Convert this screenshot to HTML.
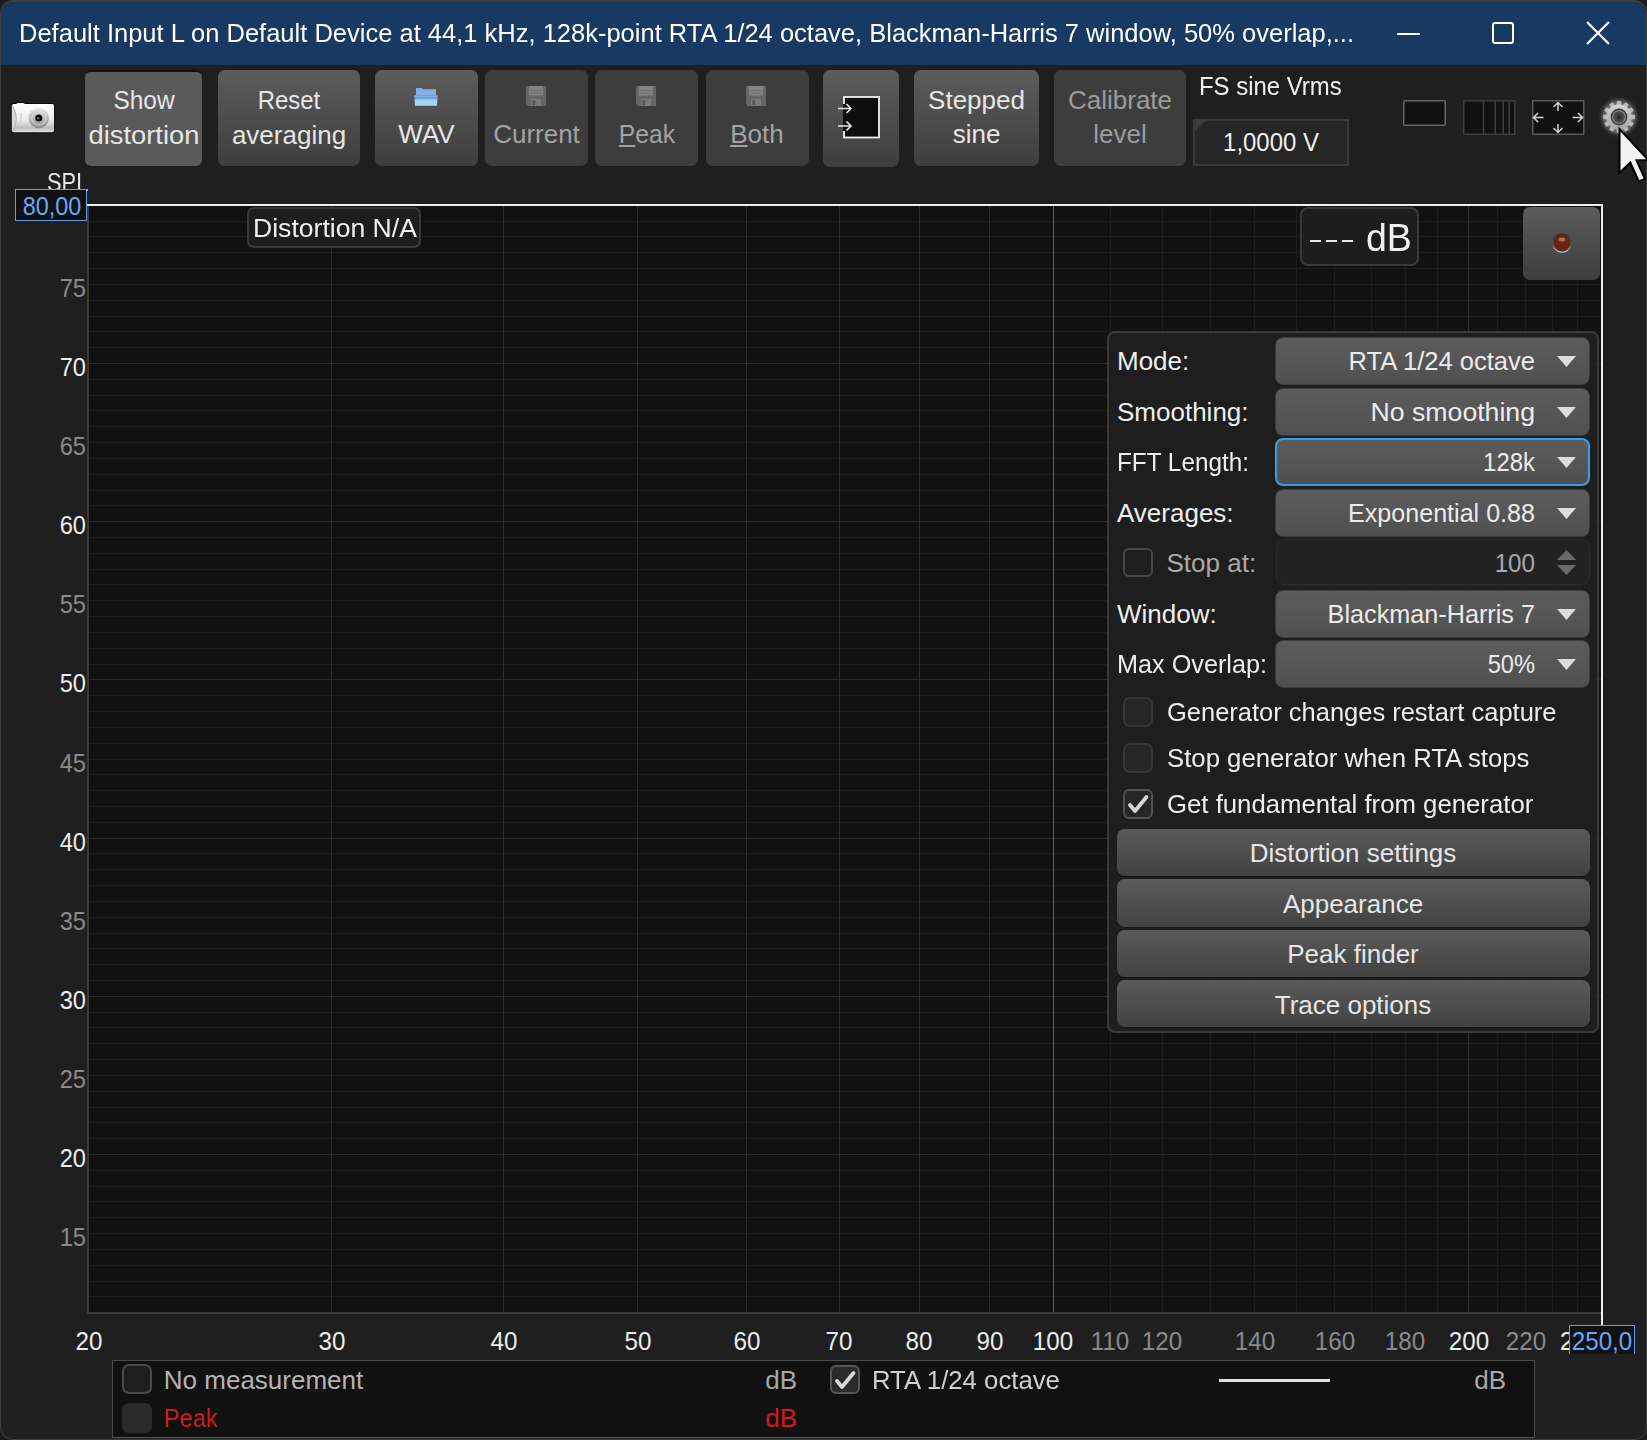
<!DOCTYPE html><html><head><meta charset="utf-8"><style>
html,body{margin:0;padding:0;background:#1c1c1c;width:1647px;height:1440px;overflow:hidden}
.t{position:absolute;white-space:nowrap;font-family:"Liberation Sans", sans-serif}
.b{position:absolute;box-sizing:border-box}
#win{position:absolute;left:0;top:0;width:1647px;height:1440px;box-sizing:border-box;border:1px solid #3e3e3e;border-top-width:2px;border-radius:13px;background:#1f1f1f;overflow:hidden}
</style></head><body><div id="win"></div>

<div class="b" style="left:1px;top:2px;width:1645px;height:63px;background:#173962;border-radius:12px 12px 0 0"></div>
<div class="t" style="left:19px;top:20.49px;font-size:26px;line-height:26px;color:#ffffff;transform: scaleX(0.981);transform-origin:left center;">Default Input L on Default Device at 44,1 kHz, 128k-point RTA 1/24 octave, Blackman-Harris 7 window, 50% overlap,...</div>
<div class="b" style="left:1397px;top:33px;width:23px;height:2px;background:#fff"></div>
<div class="b" style="left:1492px;top:22px;width:22px;height:22px;border:2px solid #fff;border-radius:3px"></div>
<svg class="b" style="left:1585px;top:20px" width="26" height="26"><path d="M2 2 L24 24 M24 2 L2 24" stroke="#fff" stroke-width="2.2"/></svg>
<div class="b" style="left:85px;top:70px;width:117px;height:96px;background:#5a5a5a;border-radius:6px;border-top:2px solid #111"></div>
<div class="t" style="left:143.5px;top:87.49px;font-size:26px;line-height:26px;color:#e6e6e6;transform:translateX(-50%) scaleX(0.94);transform-origin:center center;">Show</div>
<div class="t" style="left:143.7px;top:122.19px;font-size:26px;line-height:26px;color:#e6e6e6;transform:translateX(-50%) scaleX(1.05);transform-origin:center center;">distortion</div>
<div class="b" style="left:218px;top:70px;width:142px;height:96px;background:linear-gradient(#5c5c5c,#3e3e3e);border-radius:7px"></div>
<div class="t" style="left:289px;top:87.49px;font-size:26px;line-height:26px;color:#e6e6e6;transform:translateX(-50%) scaleX(0.92);transform-origin:center center;">Reset</div>
<div class="t" style="left:289px;top:122.19px;font-size:26px;line-height:26px;color:#e6e6e6;transform:translateX(-50%);transform-origin:center center;">averaging</div>
<div class="b" style="left:375px;top:70px;width:103px;height:96px;background:linear-gradient(#5c5c5c,#3e3e3e);border-radius:7px"></div>
<div class="t" style="left:426.5px;top:120.59px;font-size:26px;line-height:26px;color:#e6e6e6;transform:translateX(-50%);transform-origin:center center;">WAV</div>
<div class="b" style="left:485px;top:70px;width:103px;height:96px;background:#3d3d3d;border-radius:7px"></div>
<div class="t" style="left:536.5px;top:120.59px;font-size:26px;line-height:26px;color:#a3a3a3;transform:translateX(-50%);transform-origin:center center;">Current</div>
<div class="b" style="left:595px;top:70px;width:103px;height:96px;background:#3d3d3d;border-radius:7px"></div>
<div class="t" style="left:647px;top:120.59px;font-size:26px;line-height:26px;color:#a3a3a3;transform:translateX(-50%) scaleX(0.95);transform-origin:center center;"><u style="text-decoration-thickness:2px;text-underline-offset:2px">P</u>eak</div>
<div class="b" style="left:706px;top:70px;width:103px;height:96px;background:#3d3d3d;border-radius:7px"></div>
<div class="t" style="left:757px;top:120.59px;font-size:26px;line-height:26px;color:#a3a3a3;transform:translateX(-50%);transform-origin:center center;"><u style="text-decoration-thickness:2px;text-underline-offset:2px">B</u>oth</div>
<div class="b" style="left:823px;top:69.5px;width:76px;height:97.0px;background:linear-gradient(#5c5c5c,#3e3e3e);border-radius:7px"></div>
<div class="b" style="left:914px;top:70px;width:125px;height:96px;background:linear-gradient(#5c5c5c,#3e3e3e);border-radius:7px"></div>
<div class="t" style="left:976.5px;top:87.19px;font-size:26px;line-height:26px;color:#e6e6e6;transform:translateX(-50%);transform-origin:center center;">Stepped</div>
<div class="t" style="left:976.5px;top:120.99px;font-size:26px;line-height:26px;color:#e6e6e6;transform:translateX(-50%);transform-origin:center center;">sine</div>
<div class="b" style="left:1054px;top:70px;width:132px;height:96px;background:#3d3d3d;border-radius:7px"></div>
<div class="t" style="left:1120px;top:87.19px;font-size:26px;line-height:26px;color:#9c9c9c;transform:translateX(-50%);transform-origin:center center;">Calibrate</div>
<div class="t" style="left:1120px;top:120.99px;font-size:26px;line-height:26px;color:#9c9c9c;transform:translateX(-50%);transform-origin:center center;">level</div>
<div class="t" style="left:1199px;top:73.39px;font-size:26px;line-height:26px;color:#f0f0f0;transform: scaleX(0.92);transform-origin:left center;">FS sine Vrms</div>
<div class="b" style="left:1193px;top:119px;width:156px;height:47px;background:#262626;border:2px solid #3a3a3a"></div>
<svg class="b" style="left:1195px;top:121px" width="12" height="11"><path d="M0 0 H11 L0 10 Z" fill="#3a3a3a"/></svg>
<div class="t" style="left:1271px;top:129.39px;font-size:26px;line-height:26px;color:#f0f0f0;transform:translateX(-50%) scaleX(0.92);transform-origin:center center;">1,0000 V</div>
<svg class="b" style="left:0;top:0" width="1647" height="1440"><rect x="89" y="206" width="1512" height="1106" fill="#111"/><line x1="89" x2="1601" y1="1296.5" y2="1296.5" stroke="#1c1c1c" stroke-width="1"/><line x1="89" x2="1601" y1="1281.5" y2="1281.5" stroke="#1c1c1c" stroke-width="1"/><line x1="89" x2="1601" y1="1265.5" y2="1265.5" stroke="#1c1c1c" stroke-width="1"/><line x1="89" x2="1601" y1="1249.5" y2="1249.5" stroke="#1c1c1c" stroke-width="1"/><line x1="89" x2="1601" y1="1233.5" y2="1233.5" stroke="#1c1c1c" stroke-width="1"/><line x1="89" x2="1601" y1="1217.5" y2="1217.5" stroke="#1c1c1c" stroke-width="1"/><line x1="89" x2="1601" y1="1201.5" y2="1201.5" stroke="#1c1c1c" stroke-width="1"/><line x1="89" x2="1601" y1="1186.5" y2="1186.5" stroke="#1c1c1c" stroke-width="1"/><line x1="89" x2="1601" y1="1170.5" y2="1170.5" stroke="#1c1c1c" stroke-width="1"/><line x1="89" x2="1601" y1="1154.5" y2="1154.5" stroke="#2a2a2a" stroke-width="1"/><line x1="89" x2="1601" y1="1138.5" y2="1138.5" stroke="#1c1c1c" stroke-width="1"/><line x1="89" x2="1601" y1="1122.5" y2="1122.5" stroke="#1c1c1c" stroke-width="1"/><line x1="89" x2="1601" y1="1107.5" y2="1107.5" stroke="#1c1c1c" stroke-width="1"/><line x1="89" x2="1601" y1="1091.5" y2="1091.5" stroke="#1c1c1c" stroke-width="1"/><line x1="89" x2="1601" y1="1075.5" y2="1075.5" stroke="#1c1c1c" stroke-width="1"/><line x1="89" x2="1601" y1="1059.5" y2="1059.5" stroke="#1c1c1c" stroke-width="1"/><line x1="89" x2="1601" y1="1043.5" y2="1043.5" stroke="#1c1c1c" stroke-width="1"/><line x1="89" x2="1601" y1="1027.5" y2="1027.5" stroke="#1c1c1c" stroke-width="1"/><line x1="89" x2="1601" y1="1012.5" y2="1012.5" stroke="#1c1c1c" stroke-width="1"/><line x1="89" x2="1601" y1="996.5" y2="996.5" stroke="#2a2a2a" stroke-width="1"/><line x1="89" x2="1601" y1="980.5" y2="980.5" stroke="#1c1c1c" stroke-width="1"/><line x1="89" x2="1601" y1="964.5" y2="964.5" stroke="#1c1c1c" stroke-width="1"/><line x1="89" x2="1601" y1="948.5" y2="948.5" stroke="#1c1c1c" stroke-width="1"/><line x1="89" x2="1601" y1="933.5" y2="933.5" stroke="#1c1c1c" stroke-width="1"/><line x1="89" x2="1601" y1="917.5" y2="917.5" stroke="#1c1c1c" stroke-width="1"/><line x1="89" x2="1601" y1="901.5" y2="901.5" stroke="#1c1c1c" stroke-width="1"/><line x1="89" x2="1601" y1="885.5" y2="885.5" stroke="#1c1c1c" stroke-width="1"/><line x1="89" x2="1601" y1="869.5" y2="869.5" stroke="#1c1c1c" stroke-width="1"/><line x1="89" x2="1601" y1="853.5" y2="853.5" stroke="#1c1c1c" stroke-width="1"/><line x1="89" x2="1601" y1="838.5" y2="838.5" stroke="#2a2a2a" stroke-width="1"/><line x1="89" x2="1601" y1="822.5" y2="822.5" stroke="#1c1c1c" stroke-width="1"/><line x1="89" x2="1601" y1="806.5" y2="806.5" stroke="#1c1c1c" stroke-width="1"/><line x1="89" x2="1601" y1="790.5" y2="790.5" stroke="#1c1c1c" stroke-width="1"/><line x1="89" x2="1601" y1="774.5" y2="774.5" stroke="#1c1c1c" stroke-width="1"/><line x1="89" x2="1601" y1="759.5" y2="759.5" stroke="#1c1c1c" stroke-width="1"/><line x1="89" x2="1601" y1="743.5" y2="743.5" stroke="#1c1c1c" stroke-width="1"/><line x1="89" x2="1601" y1="727.5" y2="727.5" stroke="#1c1c1c" stroke-width="1"/><line x1="89" x2="1601" y1="711.5" y2="711.5" stroke="#1c1c1c" stroke-width="1"/><line x1="89" x2="1601" y1="695.5" y2="695.5" stroke="#1c1c1c" stroke-width="1"/><line x1="89" x2="1601" y1="679.5" y2="679.5" stroke="#2a2a2a" stroke-width="1"/><line x1="89" x2="1601" y1="664.5" y2="664.5" stroke="#1c1c1c" stroke-width="1"/><line x1="89" x2="1601" y1="648.5" y2="648.5" stroke="#1c1c1c" stroke-width="1"/><line x1="89" x2="1601" y1="632.5" y2="632.5" stroke="#1c1c1c" stroke-width="1"/><line x1="89" x2="1601" y1="616.5" y2="616.5" stroke="#1c1c1c" stroke-width="1"/><line x1="89" x2="1601" y1="600.5" y2="600.5" stroke="#1c1c1c" stroke-width="1"/><line x1="89" x2="1601" y1="584.5" y2="584.5" stroke="#1c1c1c" stroke-width="1"/><line x1="89" x2="1601" y1="569.5" y2="569.5" stroke="#1c1c1c" stroke-width="1"/><line x1="89" x2="1601" y1="553.5" y2="553.5" stroke="#1c1c1c" stroke-width="1"/><line x1="89" x2="1601" y1="537.5" y2="537.5" stroke="#1c1c1c" stroke-width="1"/><line x1="89" x2="1601" y1="521.5" y2="521.5" stroke="#2a2a2a" stroke-width="1"/><line x1="89" x2="1601" y1="505.5" y2="505.5" stroke="#1c1c1c" stroke-width="1"/><line x1="89" x2="1601" y1="490.5" y2="490.5" stroke="#1c1c1c" stroke-width="1"/><line x1="89" x2="1601" y1="474.5" y2="474.5" stroke="#1c1c1c" stroke-width="1"/><line x1="89" x2="1601" y1="458.5" y2="458.5" stroke="#1c1c1c" stroke-width="1"/><line x1="89" x2="1601" y1="442.5" y2="442.5" stroke="#1c1c1c" stroke-width="1"/><line x1="89" x2="1601" y1="426.5" y2="426.5" stroke="#1c1c1c" stroke-width="1"/><line x1="89" x2="1601" y1="410.5" y2="410.5" stroke="#1c1c1c" stroke-width="1"/><line x1="89" x2="1601" y1="395.5" y2="395.5" stroke="#1c1c1c" stroke-width="1"/><line x1="89" x2="1601" y1="379.5" y2="379.5" stroke="#1c1c1c" stroke-width="1"/><line x1="89" x2="1601" y1="363.5" y2="363.5" stroke="#2a2a2a" stroke-width="1"/><line x1="89" x2="1601" y1="347.5" y2="347.5" stroke="#1c1c1c" stroke-width="1"/><line x1="89" x2="1601" y1="331.5" y2="331.5" stroke="#1c1c1c" stroke-width="1"/><line x1="89" x2="1601" y1="316.5" y2="316.5" stroke="#1c1c1c" stroke-width="1"/><line x1="89" x2="1601" y1="300.5" y2="300.5" stroke="#1c1c1c" stroke-width="1"/><line x1="89" x2="1601" y1="284.5" y2="284.5" stroke="#1c1c1c" stroke-width="1"/><line x1="89" x2="1601" y1="268.5" y2="268.5" stroke="#1c1c1c" stroke-width="1"/><line x1="89" x2="1601" y1="252.5" y2="252.5" stroke="#1c1c1c" stroke-width="1"/><line x1="89" x2="1601" y1="236.5" y2="236.5" stroke="#1c1c1c" stroke-width="1"/><line x1="89" x2="1601" y1="221.5" y2="221.5" stroke="#1c1c1c" stroke-width="1"/><line x1="331.5" x2="331.5" y1="206" y2="1312" stroke="#2e2e2e" stroke-width="1"/><line x1="503.5" x2="503.5" y1="206" y2="1312" stroke="#2e2e2e" stroke-width="1"/><line x1="637.5" x2="637.5" y1="206" y2="1312" stroke="#2e2e2e" stroke-width="1"/><line x1="746.5" x2="746.5" y1="206" y2="1312" stroke="#2e2e2e" stroke-width="1"/><line x1="839.5" x2="839.5" y1="206" y2="1312" stroke="#2e2e2e" stroke-width="1"/><line x1="919.5" x2="919.5" y1="206" y2="1312" stroke="#2e2e2e" stroke-width="1"/><line x1="989.5" x2="989.5" y1="206" y2="1312" stroke="#2e2e2e" stroke-width="1"/><line x1="1053.5" x2="1053.5" y1="206" y2="1312" stroke="#5e5e5e" stroke-width="1"/><line x1="1110.5" x2="1110.5" y1="206" y2="1312" stroke="#1d1d1d" stroke-width="1"/><line x1="1162.5" x2="1162.5" y1="206" y2="1312" stroke="#1d1d1d" stroke-width="1"/><line x1="1210.5" x2="1210.5" y1="206" y2="1312" stroke="#1d1d1d" stroke-width="1"/><line x1="1254.5" x2="1254.5" y1="206" y2="1312" stroke="#1d1d1d" stroke-width="1"/><line x1="1296.5" x2="1296.5" y1="206" y2="1312" stroke="#1d1d1d" stroke-width="1"/><line x1="1334.5" x2="1334.5" y1="206" y2="1312" stroke="#1d1d1d" stroke-width="1"/><line x1="1371.5" x2="1371.5" y1="206" y2="1312" stroke="#1d1d1d" stroke-width="1"/><line x1="1405.5" x2="1405.5" y1="206" y2="1312" stroke="#1d1d1d" stroke-width="1"/><line x1="1437.5" x2="1437.5" y1="206" y2="1312" stroke="#1d1d1d" stroke-width="1"/><line x1="1468.5" x2="1468.5" y1="206" y2="1312" stroke="#343434" stroke-width="1"/><line x1="1497.5" x2="1497.5" y1="206" y2="1312" stroke="#1d1d1d" stroke-width="1"/><line x1="1525.5" x2="1525.5" y1="206" y2="1312" stroke="#1d1d1d" stroke-width="1"/><line x1="1552.5" x2="1552.5" y1="206" y2="1312" stroke="#1d1d1d" stroke-width="1"/><line x1="1577.5" x2="1577.5" y1="206" y2="1312" stroke="#1d1d1d" stroke-width="1"/><rect x="87" y="206" width="2" height="1108" fill="#3a3a3a"/><rect x="87" y="1312" width="1514" height="2" fill="#3a3a3a"/><rect x="87" y="204" width="1516" height="2" fill="#f0f0f0"/><rect x="1601" y="204" width="2" height="1121" fill="#f0f0f0"/></svg>
<div class="t" style="left:85.5px;top:1223.99px;font-size:26px;line-height:26px;color:#8a8a8a;transform:translateX(-100%) scaleX(0.91);transform-origin:right center;">15</div>
<div class="t" style="left:85.5px;top:1144.99px;font-size:26px;line-height:26px;color:#ececec;transform:translateX(-100%) scaleX(0.91);transform-origin:right center;">20</div>
<div class="t" style="left:85.5px;top:1065.99px;font-size:26px;line-height:26px;color:#8a8a8a;transform:translateX(-100%) scaleX(0.91);transform-origin:right center;">25</div>
<div class="t" style="left:85.5px;top:986.99px;font-size:26px;line-height:26px;color:#ececec;transform:translateX(-100%) scaleX(0.91);transform-origin:right center;">30</div>
<div class="t" style="left:85.5px;top:907.99px;font-size:26px;line-height:26px;color:#8a8a8a;transform:translateX(-100%) scaleX(0.91);transform-origin:right center;">35</div>
<div class="t" style="left:85.5px;top:828.99px;font-size:26px;line-height:26px;color:#ececec;transform:translateX(-100%) scaleX(0.91);transform-origin:right center;">40</div>
<div class="t" style="left:85.5px;top:749.99px;font-size:26px;line-height:26px;color:#8a8a8a;transform:translateX(-100%) scaleX(0.91);transform-origin:right center;">45</div>
<div class="t" style="left:85.5px;top:669.99px;font-size:26px;line-height:26px;color:#ececec;transform:translateX(-100%) scaleX(0.91);transform-origin:right center;">50</div>
<div class="t" style="left:85.5px;top:590.99px;font-size:26px;line-height:26px;color:#8a8a8a;transform:translateX(-100%) scaleX(0.91);transform-origin:right center;">55</div>
<div class="t" style="left:85.5px;top:511.99px;font-size:26px;line-height:26px;color:#ececec;transform:translateX(-100%) scaleX(0.91);transform-origin:right center;">60</div>
<div class="t" style="left:85.5px;top:432.99px;font-size:26px;line-height:26px;color:#8a8a8a;transform:translateX(-100%) scaleX(0.91);transform-origin:right center;">65</div>
<div class="t" style="left:85.5px;top:353.99px;font-size:26px;line-height:26px;color:#ececec;transform:translateX(-100%) scaleX(0.91);transform-origin:right center;">70</div>
<div class="t" style="left:85.5px;top:274.99px;font-size:26px;line-height:26px;color:#8a8a8a;transform:translateX(-100%) scaleX(0.91);transform-origin:right center;">75</div>
<div class="t" style="left:46.5px;top:169.49px;font-size:26px;line-height:26px;color:#e6e6e6;transform: scaleX(0.84);transform-origin:left center;">SPL</div>
<div class="b" style="left:15px;top:189px;width:72px;height:32px;background:#111;border:1.5px solid #5f9cf0"></div>
<div class="t" style="left:52px;top:192.59px;font-size:26px;line-height:26px;color:#6aa6f8;transform:translateX(-50%) scaleX(0.9);transform-origin:center center;">80,00</div>
<div class="t" style="left:88.5px;top:1327.99px;font-size:26px;line-height:26px;color:#ececec;transform:translateX(-50%) scaleX(0.93);transform-origin:center center;">20</div>
<div class="t" style="left:331.50593749684015px;top:1327.99px;font-size:26px;line-height:26px;color:#ececec;transform:translateX(-50%) scaleX(0.93);transform-origin:center center;">30</div>
<div class="t" style="left:503.9213940162941px;top:1327.99px;font-size:26px;line-height:26px;color:#ececec;transform:translateX(-50%) scaleX(0.93);transform-origin:center center;">40</div>
<div class="t" style="left:637.6572119674119px;top:1327.99px;font-size:26px;line-height:26px;color:#ececec;transform:translateX(-50%) scaleX(0.93);transform-origin:center center;">50</div>
<div class="t" style="left:746.9273315131342px;top:1327.99px;font-size:26px;line-height:26px;color:#ececec;transform:translateX(-50%) scaleX(0.93);transform-origin:center center;">60</div>
<div class="t" style="left:839.3139012033804px;top:1327.99px;font-size:26px;line-height:26px;color:#ececec;transform:translateX(-50%) scaleX(0.93);transform-origin:center center;">70</div>
<div class="t" style="left:919.3427880325881px;top:1327.99px;font-size:26px;line-height:26px;color:#ececec;transform:translateX(-50%) scaleX(0.93);transform-origin:center center;">80</div>
<div class="t" style="left:989.9332690099743px;top:1327.99px;font-size:26px;line-height:26px;color:#ececec;transform:translateX(-50%) scaleX(0.93);transform-origin:center center;">90</div>
<div class="t" style="left:1053.078605983706px;top:1327.99px;font-size:26px;line-height:26px;color:#ececec;transform:translateX(-50%) scaleX(0.93);transform-origin:center center;">100</div>
<div class="t" style="left:1110.2005115020565px;top:1327.99px;font-size:26px;line-height:26px;color:#8a8a8a;transform:translateX(-50%) scaleX(0.93);transform-origin:center center;">110</div>
<div class="t" style="left:1162.3487255294283px;top:1327.99px;font-size:26px;line-height:26px;color:#8a8a8a;transform:translateX(-50%) scaleX(0.93);transform-origin:center center;">120</div>
<div class="t" style="left:1254.7352952196743px;top:1327.99px;font-size:26px;line-height:26px;color:#8a8a8a;transform:translateX(-50%) scaleX(0.93);transform-origin:center center;">140</div>
<div class="t" style="left:1334.764182048882px;top:1327.99px;font-size:26px;line-height:26px;color:#8a8a8a;transform:translateX(-50%) scaleX(0.93);transform-origin:center center;">160</div>
<div class="t" style="left:1405.3546630262683px;top:1327.99px;font-size:26px;line-height:26px;color:#8a8a8a;transform:translateX(-50%) scaleX(0.93);transform-origin:center center;">180</div>
<div class="t" style="left:1468.5px;top:1327.99px;font-size:26px;line-height:26px;color:#ececec;transform:translateX(-50%) scaleX(0.93);transform-origin:center center;">200</div>
<div class="t" style="left:1525.6219055183503px;top:1327.99px;font-size:26px;line-height:26px;color:#8a8a8a;transform:translateX(-50%) scaleX(0.93);transform-origin:center center;">220</div>
<div class="t" style="left:1567px;top:1327.99px;font-size:26px;line-height:26px;color:#ececec;transform:translateX(-50%);transform-origin:center center;">2</div>
<div class="b" style="left:1569px;top:1325px;width:65.5px;height:29px;background:#111;border:1.5px solid #5f9cf0;border-bottom:none"></div>
<div class="t" style="left:1602px;top:1327.99px;font-size:26px;line-height:26px;color:#6aa6f8;transform:translateX(-50%) scaleX(0.93);transform-origin:center center;">250,0</div>
<div class="b" style="left:247px;top:207px;width:174px;height:41px;background:rgba(31,31,31,0.9);border:2px solid #3a3a3a;border-radius:7px"></div>
<div class="t" style="left:252.5px;top:215.09px;font-size:26px;line-height:26px;color:#f0f0f0;transform: scaleX(1.022);transform-origin:left center;">Distortion N/A</div>
<div class="b" style="left:1300px;top:207px;width:119px;height:59px;background:rgba(31,31,31,0.9);border:2px solid #3a3a3a;border-radius:8px"></div>
<div class="b" style="left:1310px;top:239.5px;width:11px;height:2.5px;background:#eaeaea"></div>
<div class="b" style="left:1326px;top:239.5px;width:11px;height:2.5px;background:#eaeaea"></div>
<div class="b" style="left:1342px;top:239.5px;width:10.5px;height:2.5px;background:#eaeaea"></div>
<div class="t" style="left:1366px;top:218.73px;font-size:38.7px;line-height:38.7px;color:#f0f0f0;transform: scaleX(0.97);transform-origin:left center;">dB</div>
<div class="b" style="left:1523px;top:207px;width:77px;height:73px;background:linear-gradient(#5c5c5c,#3e3e3e);border-radius:7px"></div>
<div class="b" style="left:1107px;top:331px;width:492px;height:702px;background:rgba(31,31,31,0.93);border:2px solid #3a3a3a;border-radius:8px"></div>
<div class="t" style="left:1117px;top:348.39px;font-size:26px;line-height:26px;color:#eeeeee;transform:;transform-origin:left center;">Mode:</div>
<div class="b" style="left:1275px;top:337px;width:315px;height:47.5px;background:linear-gradient(#5c5c5c,#505050);border:1px solid #3c3c3c;border-radius:8px"></div>
<div class="t" style="left:1535px;top:348.39px;font-size:26px;line-height:26px;color:#ececec;transform:translateX(-100%) scaleX(0.982);transform-origin:right center;">RTA 1/24 octave</div>
<svg class="b" style="left:1557px;top:355.5px" width="20" height="12"><path d="M0 0 H19 L9.5 11 Z" fill="#dcdcdc"/></svg>
<div class="t" style="left:1117px;top:399.39px;font-size:26px;line-height:26px;color:#eeeeee;transform:;transform-origin:left center;">Smoothing:</div>
<div class="b" style="left:1275px;top:388px;width:315px;height:47.5px;background:linear-gradient(#5c5c5c,#505050);border:1px solid #3c3c3c;border-radius:8px"></div>
<div class="t" style="left:1535px;top:399.39px;font-size:26px;line-height:26px;color:#ececec;transform:translateX(-100%) scaleX(1.025);transform-origin:right center;">No smoothing</div>
<svg class="b" style="left:1557px;top:406.5px" width="20" height="12"><path d="M0 0 H19 L9.5 11 Z" fill="#dcdcdc"/></svg>
<div class="t" style="left:1117px;top:449.39px;font-size:26px;line-height:26px;color:#eeeeee;transform: scaleX(0.935);transform-origin:left center;">FFT Length:</div>
<div class="b" style="left:1275px;top:438px;width:315px;height:47.5px;background:linear-gradient(#5c5c5c,#505050);border:2px solid #3a9ee4;border-radius:8px"></div>
<div class="t" style="left:1535px;top:449.39px;font-size:26px;line-height:26px;color:#ececec;transform:translateX(-100%) scaleX(0.92);transform-origin:right center;">128k</div>
<svg class="b" style="left:1557px;top:456.5px" width="20" height="12"><path d="M0 0 H19 L9.5 11 Z" fill="#dcdcdc"/></svg>
<div class="t" style="left:1117px;top:500.39px;font-size:26px;line-height:26px;color:#eeeeee;transform:;transform-origin:left center;">Averages:</div>
<div class="b" style="left:1275px;top:489px;width:315px;height:47.5px;background:linear-gradient(#5c5c5c,#505050);border:1px solid #3c3c3c;border-radius:8px"></div>
<div class="t" style="left:1535px;top:500.39px;font-size:26px;line-height:26px;color:#ececec;transform:translateX(-100%) scaleX(0.965);transform-origin:right center;">Exponential 0.88</div>
<svg class="b" style="left:1557px;top:507.5px" width="20" height="12"><path d="M0 0 H19 L9.5 11 Z" fill="#dcdcdc"/></svg>
<div class="b" style="left:1123px;top:548px;width:30px;height:29px;border:2px solid #474747;border-radius:6px"></div>
<div class="t" style="left:1166.5px;top:550.39px;font-size:26px;line-height:26px;color:#a9a9a9;transform:;transform-origin:left center;">Stop at:</div>
<div class="b" style="left:1276px;top:539px;width:314px;height:46px;background:#222;border:1px solid #2c2c2c;border-radius:8px"></div>
<div class="t" style="left:1535px;top:550.39px;font-size:26px;line-height:26px;color:#a9a9a9;transform:translateX(-100%) scaleX(0.93);transform-origin:right center;">100</div>
<svg class="b" style="left:1557px;top:550px" width="20" height="26"><path d="M0 10 H19 L9.5 0 Z M0 15 H19 L9.5 25 Z" fill="#6a6a6a"/></svg>
<div class="t" style="left:1117px;top:601.39px;font-size:26px;line-height:26px;color:#eeeeee;transform:;transform-origin:left center;">Window:</div>
<div class="b" style="left:1275px;top:590px;width:315px;height:47.5px;background:linear-gradient(#5c5c5c,#505050);border:1px solid #3c3c3c;border-radius:8px"></div>
<div class="t" style="left:1535px;top:601.39px;font-size:26px;line-height:26px;color:#ececec;transform:translateX(-100%) scaleX(0.97);transform-origin:right center;">Blackman-Harris 7</div>
<svg class="b" style="left:1557px;top:608.5px" width="20" height="12"><path d="M0 0 H19 L9.5 11 Z" fill="#dcdcdc"/></svg>
<div class="t" style="left:1117px;top:651.39px;font-size:26px;line-height:26px;color:#eeeeee;transform: scaleX(0.97);transform-origin:left center;">Max Overlap:</div>
<div class="b" style="left:1275px;top:640px;width:315px;height:47.5px;background:linear-gradient(#5c5c5c,#505050);border:1px solid #3c3c3c;border-radius:8px"></div>
<div class="t" style="left:1535px;top:651.39px;font-size:26px;line-height:26px;color:#ececec;transform:translateX(-100%) scaleX(0.91);transform-origin:right center;">50%</div>
<svg class="b" style="left:1557px;top:658.5px" width="20" height="12"><path d="M0 0 H19 L9.5 11 Z" fill="#dcdcdc"/></svg>
<div class="b" style="left:1123px;top:697px;width:30px;height:30px;background:#262626;border:2px solid #363636;border-radius:7px"></div>
<div class="t" style="left:1166.5px;top:699.49px;font-size:26px;line-height:26px;color:#eeeeee;transform: scaleX(0.98);transform-origin:left center;">Generator changes restart capture</div>
<div class="b" style="left:1123px;top:743px;width:30px;height:30px;background:#262626;border:2px solid #363636;border-radius:7px"></div>
<div class="t" style="left:1166.5px;top:745.49px;font-size:26px;line-height:26px;color:#eeeeee;transform: scaleX(0.99);transform-origin:left center;">Stop generator when RTA stops</div>
<div class="b" style="left:1123px;top:789px;width:30px;height:30px;background:#262626;border:2px solid #505050;border-radius:6px"></div>
<svg class="b" style="left:1123px;top:789px" width="30" height="30"><path d="M7 16 L12 22 L23.5 8" stroke="#d6d6d6" stroke-width="3.8" stroke-linecap="round" stroke-linejoin="round" fill="none"/></svg>
<div class="t" style="left:1166.5px;top:791.49px;font-size:26px;line-height:26px;color:#eeeeee;transform: scaleX(0.99);transform-origin:left center;">Get fundamental from generator</div>
<div class="b" style="left:1116.5px;top:829.0px;width:473.5px;height:47.299999999999955px;background:linear-gradient(#5a5a5a,#424242);border-radius:8px;box-shadow:0 1px 0 #141414"></div>
<div class="t" style="left:1353px;top:840.39px;font-size:26px;line-height:26px;color:#e6e6e6;transform:translateX(-50%);transform-origin:center center;">Distortion settings</div>
<div class="b" style="left:1116.5px;top:879.4px;width:473.5px;height:47.299999999999955px;background:linear-gradient(#5a5a5a,#424242);border-radius:8px;box-shadow:0 1px 0 #141414"></div>
<div class="t" style="left:1353px;top:890.79px;font-size:26px;line-height:26px;color:#e6e6e6;transform:translateX(-50%);transform-origin:center center;">Appearance</div>
<div class="b" style="left:1116.5px;top:929.8px;width:473.5px;height:47.299999999999955px;background:linear-gradient(#5a5a5a,#424242);border-radius:8px;box-shadow:0 1px 0 #141414"></div>
<div class="t" style="left:1353px;top:941.19px;font-size:26px;line-height:26px;color:#e6e6e6;transform:translateX(-50%);transform-origin:center center;">Peak finder</div>
<div class="b" style="left:1116.5px;top:980.2px;width:473.5px;height:47.299999999999955px;background:linear-gradient(#5a5a5a,#424242);border-radius:8px;box-shadow:0 1px 0 #141414"></div>
<div class="t" style="left:1353px;top:991.59px;font-size:26px;line-height:26px;color:#e6e6e6;transform:translateX(-50%);transform-origin:center center;">Trace options</div>
<div class="b" style="left:112px;top:1360px;width:1423px;height:78px;background:#111;border:1px solid #4a4a4a;border-bottom-color:#555"></div>
<div class="b" style="left:122px;top:1364px;width:30px;height:30px;background:#1e1e1e;border:2px solid #4a4a4a;border-radius:7px"></div>
<div class="t" style="left:163.8px;top:1367.29px;font-size:26px;line-height:26px;color:#b4b4b4;transform:;transform-origin:left center;">No measurement</div>
<div class="t" style="left:797px;top:1367.29px;font-size:26px;line-height:26px;color:#a9a9a9;transform:translateX(-100%);transform-origin:right center;">dB</div>
<div class="b" style="left:830px;top:1365px;width:30px;height:29px;background:#2a2a2a;border:2px solid #565656;border-radius:6px"></div>
<svg class="b" style="left:830px;top:1365px" width="30" height="30"><path d="M7 16 L12 22 L23.5 8" stroke="#d6d6d6" stroke-width="3.8" stroke-linecap="round" stroke-linejoin="round" fill="none"/></svg>
<div class="t" style="left:872px;top:1367.29px;font-size:26px;line-height:26px;color:#d0d0d0;transform: scaleX(0.99);transform-origin:left center;">RTA 1/24 octave</div>
<div class="b" style="left:1219px;top:1379px;width:111px;height:3px;background:#e0e0e0"></div>
<div class="t" style="left:1506px;top:1367.29px;font-size:26px;line-height:26px;color:#a9a9a9;transform:translateX(-100%);transform-origin:right center;">dB</div>
<div class="b" style="left:122px;top:1403px;width:30px;height:30px;background:#2a2a2a;border-radius:7px"></div>
<div class="t" style="left:164px;top:1404.69px;font-size:26px;line-height:26px;color:#d51a1a;transform: scaleX(0.91);transform-origin:left center;">Peak</div>
<div class="t" style="left:797px;top:1404.69px;font-size:26px;line-height:26px;color:#d51a1a;transform:translateX(-100%);transform-origin:right center;">dB</div>
<svg class="b" style="left:9px;top:101px" width="50" height="34"><defs><linearGradient id="cg" x1="0" y1="0" x2="0" y2="1"><stop offset="0" stop-color="#ffffff"/><stop offset="0.55" stop-color="#ededed"/><stop offset="0.85" stop-color="#bdbdbd"/><stop offset="1" stop-color="#e2e2e2"/></linearGradient><linearGradient id="lg" x1="0" y1="0" x2="0" y2="1"><stop offset="0" stop-color="#eeeeee"/><stop offset="0.5" stop-color="#bcbcbc"/><stop offset="1" stop-color="#8c8c8c"/></linearGradient></defs><rect x="2" y="2.3" width="43.6" height="29.9" rx="2.5" fill="#070707"/><path d="M6.3 2.6 Q7 1.3 9 1.3 H14 Q16 1.3 16.5 2.6 Z" fill="#070707"/><rect x="2.8" y="3" width="42.2" height="28.3" rx="1.8" fill="url(#cg)"/><path d="M7 3.2 Q7.5 2.1 9.2 2.1 H13.8 Q15.5 2.1 15.8 3.2 Z" fill="#f2f2f2"/><path d="M3 4 Q11.5 17 3.2 30.5 Z" fill="#d6d6d6"/><path d="M3.2 4 Q11.5 17 3.4 30.5" stroke="#a8a8a8" stroke-width="0.8" fill="none"/><path d="M11.9 12 V22" stroke="#d0d0d0" stroke-width="1.2"/><circle cx="29.8" cy="17" r="10.3" fill="url(#lg)"/><circle cx="29.8" cy="17" r="7" fill="none" stroke="#d8d8d8" stroke-width="1.2" opacity="0.8"/><circle cx="29.8" cy="17" r="3.5" fill="#060606"/><circle cx="29.2" cy="17.3" r="1.3" fill="#3a6cb0"/></svg>
<svg class="b" style="left:413px;top:86px" width="26" height="22"><defs><linearGradient id="fg" x1="0" y1="0" x2="0" y2="1"><stop offset="0" stop-color="#5a8fd8"/><stop offset="0.12" stop-color="#8cbaea"/><stop offset="0.25" stop-color="#6898e8"/><stop offset="0.5" stop-color="#a0d0f0"/><stop offset="1" stop-color="#a6d8f6"/></linearGradient></defs><path d="M3 2.5 Q3 2 3.5 2 H8.5 L10 3.2 H23 V10 H3 Z" fill="#86b0e8"/><path d="M1.3 9 H24.7 L24 19.8 H2 Z" fill="url(#fg)"/></svg>
<svg class="b" style="left:526px;top:86px" width="21" height="21"><path d="M0 0 H20 V20 H2 L0 18 Z" fill="#666"/><rect x="3" y="0" width="14" height="9.5" fill="#838383"/><rect x="4" y="4" width="12" height="1.2" fill="#747474"/><rect x="4" y="6.8" width="12" height="1.2" fill="#747474"/><rect x="5" y="13" width="10" height="7" fill="#7a7a7a"/><rect x="6.3" y="14.2" width="3" height="5" fill="#585858"/></svg>
<svg class="b" style="left:636px;top:86px" width="21" height="21"><path d="M0 0 H20 V20 H2 L0 18 Z" fill="#666"/><rect x="3" y="0" width="14" height="9.5" fill="#838383"/><rect x="4" y="4" width="12" height="1.2" fill="#747474"/><rect x="4" y="6.8" width="12" height="1.2" fill="#747474"/><rect x="5" y="13" width="10" height="7" fill="#7a7a7a"/><rect x="6.3" y="14.2" width="3" height="5" fill="#585858"/></svg>
<svg class="b" style="left:746px;top:86px" width="21" height="21"><path d="M0 0 H20 V20 H2 L0 18 Z" fill="#666"/><rect x="3" y="0" width="14" height="9.5" fill="#838383"/><rect x="4" y="4" width="12" height="1.2" fill="#747474"/><rect x="4" y="6.8" width="12" height="1.2" fill="#747474"/><rect x="5" y="13" width="10" height="7" fill="#7a7a7a"/><rect x="6.3" y="14.2" width="3" height="5" fill="#585858"/></svg>
<svg class="b" style="left:836px;top:95px" width="46" height="46"><rect x="8" y="2" width="35" height="40.5" fill="#0e0e0e" stroke="#f0f0f0" stroke-width="1.8"/><rect x="7" y="9" width="2" height="27" fill="#0e0e0e"/><path d="M2 13.5 H15 M10.5 9 L15 13.5 L10.5 18 M2 31 H15 M10.5 26.5 L15 31 L10.5 35.5" stroke="#e6e6e6" stroke-width="1.6" fill="none"/></svg>
<svg class="b" style="left:1403px;top:100px" width="43" height="26"><rect x="0.75" y="0.75" width="41.5" height="24.5" rx="1" fill="#111" stroke="#666" stroke-width="1.5"/></svg>
<svg class="b" style="left:1463px;top:100px" width="53" height="35"><rect x="0.75" y="0.75" width="51" height="33.5" fill="#111" stroke="#3e3e3e" stroke-width="1.5"/><path d="M20.5 1 V34 M32.25 1 V34 M40.25 1 V34 M46.25 1 V34" stroke="#3e3e3e" stroke-width="1.5"/></svg>
<svg class="b" style="left:1532px;top:100px" width="53" height="35"><rect x="0.75" y="0.75" width="51" height="33.5" fill="#111" stroke="#5a5a5a" stroke-width="1.5"/><path d="M26 2.5 V11 M21.5 7 L26 2.5 L30.5 7 M26 32.5 V24 M21.5 28 L26 32.5 L30.5 28 M1.5 17.5 H11.5 M6 13 L1.5 17.5 L6 22 M50.5 17.5 H40.5 M46 13 L50.5 17.5 L46 22" stroke="#d4d4d4" stroke-width="1.5" fill="none"/></svg>
<svg class="b" style="left:1597px;top:95px" width="44" height="44"><defs><radialGradient id="gh" cx="0.5" cy="0.5" r="0.5"><stop offset="0" stop-color="#262626"/><stop offset="1" stop-color="#555"/></radialGradient><linearGradient id="gb" x1="0" y1="0" x2="0" y2="1"><stop offset="0" stop-color="#d6d6d6"/><stop offset="1" stop-color="#a4a4a4"/></linearGradient><filter id="gl" x="-40%" y="-40%" width="180%" height="180%"><feGaussianBlur stdDeviation="2"/></filter></defs><circle cx="22" cy="22" r="17" fill="#ffffff" filter="url(#gl)" opacity="0.35"/><polygon points="19.97,10.17 20.29,6.49 23.71,6.49 24.03,10.17 26.16,10.74 28.27,7.72 31.24,9.43 29.67,12.77 31.23,14.33 34.57,12.76 36.28,15.73 33.26,17.84 33.83,19.97 37.51,20.29 37.51,23.71 33.83,24.03 33.26,26.16 36.28,28.27 34.57,31.24 31.23,29.67 29.67,31.23 31.24,34.57 28.27,36.28 26.16,33.26 24.03,33.83 23.71,37.51 20.29,37.51 19.97,33.83 17.84,33.26 15.73,36.28 12.76,34.57 14.33,31.23 12.77,29.67 9.43,31.24 7.72,28.27 10.74,26.16 10.17,24.03 6.49,23.71 6.49,20.29 10.17,19.97 10.74,17.84 7.72,15.73 9.43,12.76 12.77,14.33 14.33,12.77 12.76,9.43 15.73,7.72 17.84,10.74" fill="#bcbcbc" stroke="#bcbcbc" stroke-width="0.8" stroke-linejoin="round"/><circle cx="22" cy="22" r="12.6" fill="url(#gb)"/><circle cx="22" cy="22" r="8.4" fill="#3c3c3c"/><circle cx="22" cy="22" r="6.3" fill="none" stroke="#7c7c7c" stroke-width="1.6"/><circle cx="22" cy="22" r="5.4" fill="url(#gh)"/></svg>
<svg class="b" style="left:1550px;top:231px" width="24" height="24"><defs><linearGradient id="lr" x1="0" y1="0" x2="0" y2="1"><stop offset="0" stop-color="#2a2a2a"/><stop offset="0.6" stop-color="#5a5a5a"/><stop offset="1" stop-color="#d8d8d8"/></linearGradient></defs><circle cx="12" cy="12" r="9.8" fill="url(#lr)"/><circle cx="12" cy="11.8" r="8.6" fill="#6a2212"/><ellipse cx="12" cy="8.6" rx="3.4" ry="2" fill="#a8704e"/></svg>
<svg class="b" style="left:1600px;top:110px" width="60" height="80"><path d="M19.5 19 L19.5 63 L30.3 52.5 L38.8 71.5 L45 69 L36.5 50.3 L48.5 50.3 Z" fill="#f2f2f2" stroke="#000" stroke-width="2" stroke-linejoin="miter"/></svg>
</body></html>
